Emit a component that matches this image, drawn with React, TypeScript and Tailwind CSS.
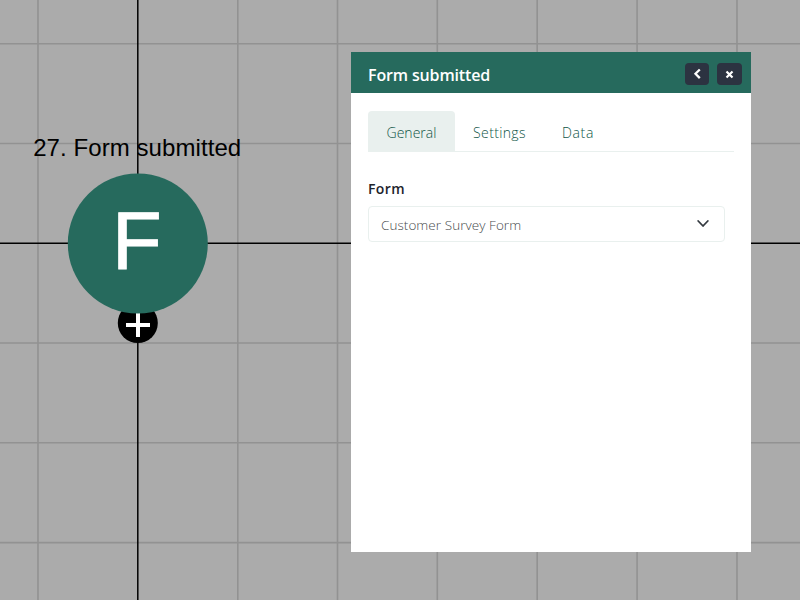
import React from "react";

const verticals = [38, 237.8, 337.5, 437.3, 537.2, 637.1, 737];
const horizontals = [43.8, 143.5, 343, 442.8, 542.6];
const tabs = [
  { name: "General", box: "w-[87px] rounded-t bg-[#e9f0ee]", tracking: "tracking-[0.02px]" },
  { name: "Settings", box: "w-[89px]", tracking: "tracking-[0.36px]" },
  { name: "Data", box: "w-[68px]", tracking: "tracking-[0.6px]" },
];

function Canvas() {
  return (
    <svg className="absolute inset-0" width="800" height="600" viewBox="0 0 800 600">
      <g stroke="#929292" strokeWidth="1.6">
        {verticals.map((x) => <line key={x} x1={x} x2={x} y1="0" y2="600" />)}
        {horizontals.map((y) => <line key={y} x1="0" x2="800" y1={y} y2={y} />)}
      </g>
      <g stroke="#000" strokeWidth="1.5">
        <line x1="137.8" x2="137.8" y1="0" y2="600" />
        <line x1="0" x2="800" y1="243.25" y2="243.25" />
      </g>
      <circle cx="137.8" cy="323" r="20" />
      <path d="M126 325H150M138 313V337" stroke="#fff" strokeWidth="4" />
      <circle cx="137.8" cy="243.5" r="70" fill="#266a5d" />
      <text x="112" y="269.4" fontSize="81.5" fill="#fff" stroke="#fff" strokeWidth="0.8" fontFamily="Liberation Sans, sans-serif">F</text>
      <text x="33.2" y="156.3" fontSize="24" textLength="208" fontFamily="Liberation Sans, sans-serif">27. Form submitted</text>
    </svg>
  );
}

export default function App() {
  return (
    <div className="relative h-[600px] w-[800px] overflow-hidden bg-[#ababab] font-['Open_Sans','Noto_Sans',sans-serif]">
      <Canvas />
      <section className="absolute left-[351px] top-[52px] h-[499.5px] w-[400px] bg-white">
        <header className="flex h-[40.5px] items-center bg-[#266a5d] pl-[17px] pr-[9px]">
          <h1 className="flex-1 pt-[6px] text-[16px] font-semibold leading-5 tracking-[-0.14px] text-white">Form submitted</h1>
          <div className="flex gap-2 pt-[3px]">
            <button aria-label="Back" className="flex h-[22px] w-6 items-center justify-center rounded bg-[#2c3341]">
              <svg width="24" height="22" viewBox="0 0 24 22" fill="none" stroke="#fff" strokeWidth="2.3"><path d="M14.8 6.5L10.5 10.8L14.8 15.1" /></svg>
            </button>
            <button aria-label="Close" className="flex h-[22px] w-[25px] items-center justify-center rounded bg-[#2c3341]">
              <svg width="25" height="22" viewBox="0 0 25 22" fill="none" stroke="#fff" strokeWidth="2.2"><path d="M9.5 8.5L15.5 14.5M15.5 8.5L9.5 14.5" /></svg>
            </button>
          </div>
        </header>
        <nav className="ml-[17px] mt-[18px] flex h-[41px] w-[366px] border-b border-[#e9f0ee]">
          {tabs.map((tab) => (
            <button key={tab.name} className={`${tab.box} flex items-center justify-center pt-1 text-[14px] font-[350] leading-5 text-[#0f5547] ${tab.tracking}`}>
              {tab.name}
            </button>
          ))}
        </nav>
        <div className="ml-[17px] mt-[27px] w-[357px]">
          <label className="block h-[27px] text-[14px] font-semibold leading-5 tracking-[0.4px] text-[#20232b]">Form</label>
          <div className="flex h-9 items-center justify-between rounded border border-[#e9f0ee] pl-3 pr-[15px]">
            <span className="pt-[2px] text-[13.5px] font-[350] leading-5 tracking-[0.06px] text-[#484b4e]">Customer Survey Form</span>
            <svg width="12" height="8" viewBox="0 0 12 8" fill="none" stroke="#343a40" strokeWidth="1.8" strokeLinecap="round" strokeLinejoin="round"><path d="M1.2 1L6 6L10.8 1" /></svg>
          </div>
        </div>
      </section>
    </div>
  );
}
